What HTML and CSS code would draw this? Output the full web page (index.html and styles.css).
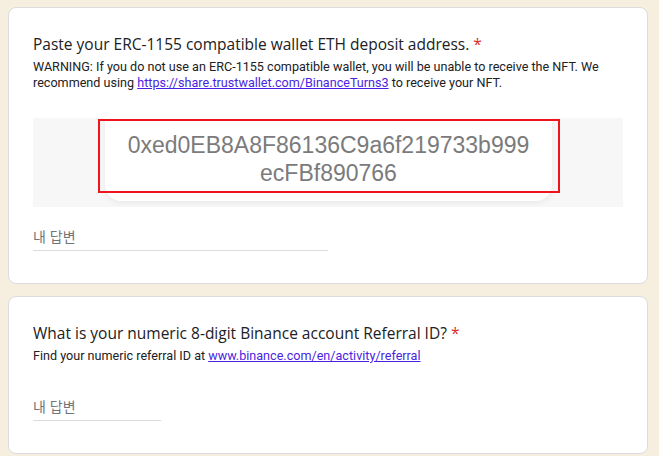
FILE: index.html
```html
<!DOCTYPE html>
<html lang="ko">
<head>
<meta charset="utf-8">
<title>Form</title>
<link rel="stylesheet" href="styles.css">
</head>
<body>
<div class="card">
  <div class="title">Paste your ERC-1155 compatible wallet ETH deposit address.<span class="req"> *</span></div>
  <div class="desc">WARNING: If you do not use an ERC-1155 compatible wallet, you will be unable to receive the NFT. We recommend using <a href="#">https://share.trustwallet.com/BinanceTurns3</a> to receive your NFT.</div>
  <div class="shot">
    <div class="shot-card">0xed0EB8A8F86136C9a6f219733b999<br>ecFBf890766</div>
    <div class="redbox"></div>
  </div>
  <div class="answer answer-wide">내 답변</div>
</div>
<div class="card">
  <div class="title">What is your numeric 8-digit Binance account Referral ID?<span class="req"> *</span></div>
  <div class="desc">Find your numeric referral ID at <a href="#">www.binance.com/en/activity/referral</a></div>
  <div class="answer answer-short">내 답변</div>
</div>
</body>
</html>
```

FILE: styles.css
```css
html, body {
  margin: 0;
  background: #f6efdf;
}
body {
  padding: 7px 0 0 8px;
  font-family: Roboto, "Noto Sans CJK KR", sans-serif;
  color: #202124;
}
.card {
  box-sizing: border-box;
  width: 640px;
  background: #fff;
  border: 1px solid #dadce0;
  border-radius: 8px;
  padding: 24px 24px 32px;
  margin-bottom: 12px;
}
.title {
  font-family: "Open Sans", sans-serif;
  font-size: 15.5px;
  line-height: 24px;
  color: #202124;
}
.req {
  color: #d93025;
}
.desc {
  margin-top: 3px;
  font-size: 12.6px;
  line-height: 16px;
  color: #202124;
}
.desc a {
  color: #4a1fe0;
  text-decoration: underline;
}
.shot {
  position: relative;
  margin-top: 27px;
  height: 89px;
  background: #f7f7f7;
  overflow: hidden;
}
.shot-card {
  box-sizing: border-box;
  width: 447px;
  height: 83px;
  margin-left: 72px;
  padding-top: 13px;
  background: #fff;
  border-radius: 0 0 16px 16px;
  box-shadow: 0 2px 6px rgba(0,0,0,0.06);
  text-align: center;
  font-family: "Liberation Sans", Arial, sans-serif;
  font-size: 23px;
  line-height: 28px;
  color: #7b7b7b;
}
.redbox {
  position: absolute;
  left: 65px;
  top: 1px;
  width: 462px;
  height: 74px;
  box-sizing: border-box;
  border: 2px solid #f0141e;
}
.answer {
  font-family: "Noto Sans CJK KR", sans-serif;
  font-size: 14px;
  line-height: 24px;
  padding-bottom: 2px;
  color: #70757a;
  border-bottom: 1px solid #dadce0;
}
.answer-wide {
  width: 295px;
  margin-top: 17px;
}
.answer-short {
  width: 128px;
  margin-top: 30px;
}
```
